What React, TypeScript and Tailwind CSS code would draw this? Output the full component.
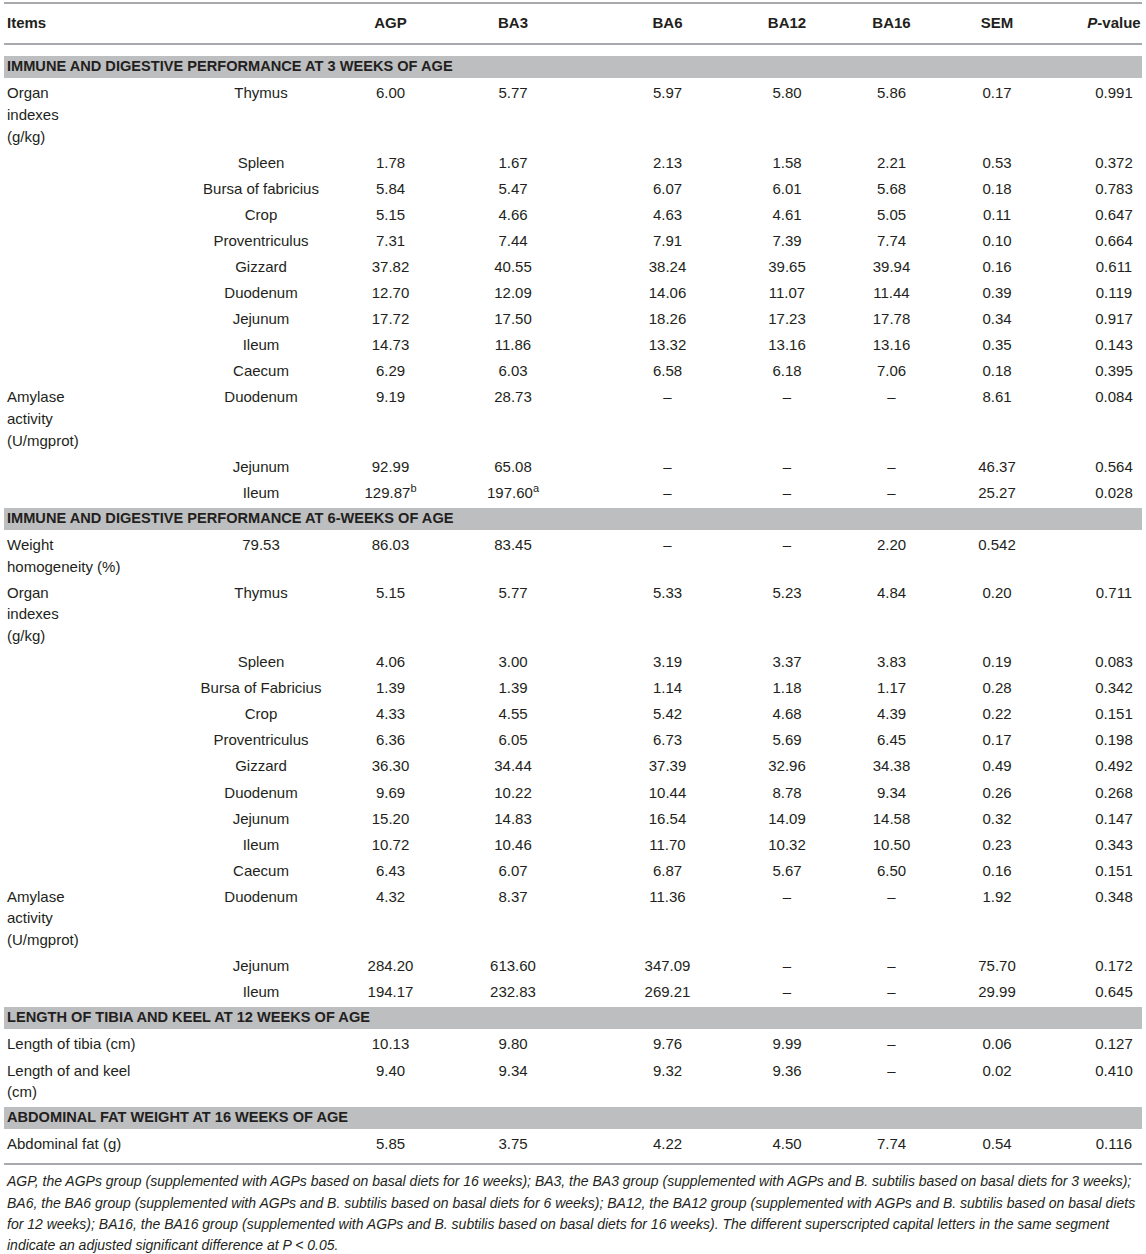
import React from 'react';

type Cell = React.ReactNode;

const grid = 'grid grid-cols-[192px_130px_126px_138px_137px_112px_105px_112px_86px]';

// per-column alignment so the centers sit where the printed table has them
const colCls = [
  'pl-[3px] text-left',
  'text-center',
  'text-center pl-[3px]',
  'text-center pr-[16px]',
  'text-center pl-[18px]',
  'text-center pl-[8px]',
  'text-center',
  'text-center pr-[6px]',
  'text-center pl-[30px]',
];

const organ = ['Organ', 'indexes', '(g/kg)'];
const amylase = ['Amylase', 'activity', '(U/mgprot)'];

type RowDef = { label?: string[]; sub?: string; values: Cell[]; span?: boolean };

const week3: RowDef[] = [
  { label: organ, sub: 'Thymus', values: ['6.00', '5.77', '5.97', '5.80', '5.86', '0.17', '0.991'] },
  { sub: 'Spleen', values: ['1.78', '1.67', '2.13', '1.58', '2.21', '0.53', '0.372'] },
  { sub: 'Bursa of fabricius', values: ['5.84', '5.47', '6.07', '6.01', '5.68', '0.18', '0.783'] },
  { sub: 'Crop', values: ['5.15', '4.66', '4.63', '4.61', '5.05', '0.11', '0.647'] },
  { sub: 'Proventriculus', values: ['7.31', '7.44', '7.91', '7.39', '7.74', '0.10', '0.664'] },
  { sub: 'Gizzard', values: ['37.82', '40.55', '38.24', '39.65', '39.94', '0.16', '0.611'] },
  { sub: 'Duodenum', values: ['12.70', '12.09', '14.06', '11.07', '11.44', '0.39', '0.119'] },
  { sub: 'Jejunum', values: ['17.72', '17.50', '18.26', '17.23', '17.78', '0.34', '0.917'] },
  { sub: 'Ileum', values: ['14.73', '11.86', '13.32', '13.16', '13.16', '0.35', '0.143'] },
  { sub: 'Caecum', values: ['6.29', '6.03', '6.58', '6.18', '7.06', '0.18', '0.395'] },
  { label: amylase, sub: 'Duodenum', values: ['9.19', '28.73', '–', '–', '–', '8.61', '0.084'] },
  { sub: 'Jejunum', values: ['92.99', '65.08', '–', '–', '–', '46.37', '0.564'] },
  {
    sub: 'Ileum',
    values: [
      <>129.87<sup className="text-[11px]">b</sup></>,
      <>197.60<sup className="text-[11px]">a</sup></>,
      '–', '–', '–', '25.27', '0.028',
    ],
  },
];

const week6: RowDef[] = [
  { label: ['Weight', 'homogeneity (%)'], sub: '79.53', values: ['86.03', '83.45', '–', '–', '2.20', '0.542', ''] },
  { label: organ, sub: 'Thymus', values: ['5.15', '5.77', '5.33', '5.23', '4.84', '0.20', '0.711'] },
  { sub: 'Spleen', values: ['4.06', '3.00', '3.19', '3.37', '3.83', '0.19', '0.083'] },
  { sub: 'Bursa of Fabricius', values: ['1.39', '1.39', '1.14', '1.18', '1.17', '0.28', '0.342'] },
  { sub: 'Crop', values: ['4.33', '4.55', '5.42', '4.68', '4.39', '0.22', '0.151'] },
  { sub: 'Proventriculus', values: ['6.36', '6.05', '6.73', '5.69', '6.45', '0.17', '0.198'] },
  { sub: 'Gizzard', values: ['36.30', '34.44', '37.39', '32.96', '34.38', '0.49', '0.492'] },
  { sub: 'Duodenum', values: ['9.69', '10.22', '10.44', '8.78', '9.34', '0.26', '0.268'] },
  { sub: 'Jejunum', values: ['15.20', '14.83', '16.54', '14.09', '14.58', '0.32', '0.147'] },
  { sub: 'Ileum', values: ['10.72', '10.46', '11.70', '10.32', '10.50', '0.23', '0.343'] },
  { sub: 'Caecum', values: ['6.43', '6.07', '6.87', '5.67', '6.50', '0.16', '0.151'] },
  { label: amylase, sub: 'Duodenum', values: ['4.32', '8.37', '11.36', '–', '–', '1.92', '0.348'] },
  { sub: 'Jejunum', values: ['284.20', '613.60', '347.09', '–', '–', '75.70', '0.172'] },
  { sub: 'Ileum', values: ['194.17', '232.83', '269.21', '–', '–', '29.99', '0.645'] },
];

const week12: RowDef[] = [
  { label: ['Length of tibia (cm)'], span: true, values: ['10.13', '9.80', '9.76', '9.99', '–', '0.06', '0.127'] },
  { label: ['Length of and keel', '(cm)'], span: true, values: ['9.40', '9.34', '9.32', '9.36', '–', '0.02', '0.410'] },
];

const week16: RowDef[] = [
  { label: ['Abdominal fat (g)'], span: true, values: ['5.85', '3.75', '4.22', '4.50', '7.74', '0.54', '0.116'] },
];

function Row({ row }: { row: RowDef }) {
  return (
    <div className={`${grid} py-[2.26px] leading-[21.6px]`}>
      {row.span ? (
        <div className={`col-span-2 ${colCls[0]}`}>
          {row.label?.map((l, i) => <div key={i}>{l}</div>)}
        </div>
      ) : (
        <>
          <div className={colCls[0]}>{row.label?.map((l, i) => <div key={i}>{l}</div>)}</div>
          <div className={colCls[1]}>{row.sub}</div>
        </>
      )}
      {row.values.map((v, i) => (
        <div key={i} className={colCls[i + 2]}>
          {v}
        </div>
      ))}
    </div>
  );
}

function Section({ title, rows }: { title: string; rows: RowDef[] }) {
  return (
    <>
      <div className="h-[26.12px] py-[2px]">
        <div className="h-full bg-[#bcbec0] pl-[3px] flex items-center font-bold text-[14.6px]">{title}</div>
      </div>
      {rows.map((r, i) => (
        <Row key={i} row={r} />
      ))}
    </>
  );
}

export default function App() {
  const heads = ['Items', '', 'AGP', 'BA3', 'BA6', 'BA12', 'BA16', 'SEM'];
  return (
    <div className="w-[1146px] bg-white px-[4px] pt-[2px] text-[15px] text-[#231f20] font-['Liberation_Sans',Arial,sans-serif]">
      <div className={`${grid} border-t-2 border-b-2 border-[#a7a9ac] h-[43px] items-center font-bold`}>
        {heads.map((h, i) => (
          <div key={i} className={colCls[i]}>
            {h}
          </div>
        ))}
        <div className={colCls[8]}>
          <span className="italic">P</span>-value
        </div>
      </div>
      <div className="h-[9px]" />
      <Section title="IMMUNE AND DIGESTIVE PERFORMANCE AT 3 WEEKS OF AGE" rows={week3} />
      <Section title="IMMUNE AND DIGESTIVE PERFORMANCE AT 6-WEEKS OF AGE" rows={week6} />
      <Section title="LENGTH OF TIBIA AND KEEL AT 12 WEEKS OF AGE" rows={week12} />
      <Section title="ABDOMINAL FAT WEIGHT AT 16 WEEKS OF AGE" rows={week16} />
      <div className="mt-[6px] border-t-2 border-[#a7a9ac]" />
      <p className="pl-[3px] pt-[6px] text-[14px] leading-[21.4px] italic">
        AGP, the AGPs group (supplemented with AGPs based on basal diets for 16 weeks); BA3, the BA3 group (supplemented with AGPs and B. subtilis based on basal diets for 3 weeks);
        <br />
        BA6, the BA6 group (supplemented with AGPs and B. subtilis based on basal diets for 6 weeks); BA12, the BA12 group (supplemented with AGPs and B. subtilis based on basal diets
        <br />
        for 12 weeks); BA16, the BA16 group (supplemented with AGPs and B. subtilis based on basal diets for 16 weeks). The different superscripted capital letters in the same segment
        <br />
        indicate an adjusted significant difference at P &lt; 0.05.
      </p>
    </div>
  );
}
